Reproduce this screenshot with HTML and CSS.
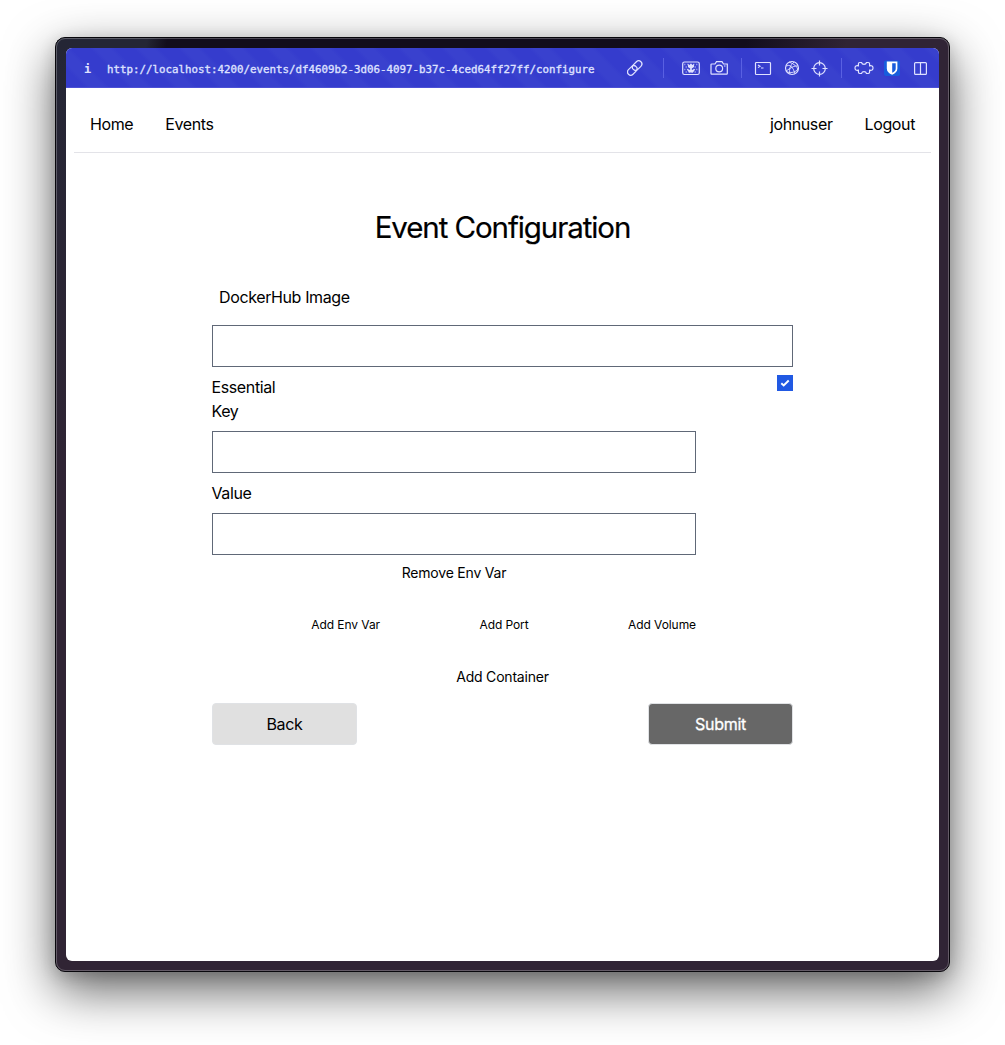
FILE: index.html
```html
<!DOCTYPE html>
<html lang="en">
<head>
<meta charset="utf-8">
<title>Event Configuration</title>
<link rel="stylesheet" href="styles.css">
</head>
<body>
<div class="window">
  <div class="screen">
    <header class="toolbar">
      <span class="info">i</span>
      <span class="url">http://localhost:4200/events/df4609b2-3d06-4097-b37c-4ced64ff27ff/configure</span>
      <svg class="tools" width="312" height="40" viewBox="0 0 312 40" fill="none" stroke="currentColor" stroke-width="1.2">
        <g transform="translate(7.700 20) rotate(-45)"><rect x="-8.800" y="-3.200" width="10.800" height="6.400" rx="3.200"/><rect x="-2" y="-3.200" width="10.800" height="6.400" rx="3.200"/></g>
        <path class="divider" d="M36.500 10v20M114.500 10v20M214.500 10v20"/>
        <rect x="55.700" y="14" width="16.600" height="12.500" rx="1.800"/>
        <path stroke-dasharray="1.500 1.500" stroke-width="1.500" opacity=".5" d="M57 16.500h14M58.500 19h12M57 21.500h14M58.500 24h12"/>
        <path fill="currentColor" stroke="none" d="M61 16l1.500 1 1.500-1.500 1.500 1.500 1.500-1v3l-2.200 1.500v1.500l3.700-1.300-2.500 3.800h-4l-2.500-3.800 3.700 1.300v-1.500L61 19z"/>
        <path d="M84.700 16h3.300l1.500-2.300h5.500l1.500 2.300h3.800v9.500q0 .6-.6.600H84.600q-.6 0-.6-.6v-9q0-.5.700-.5z"/><circle cx="92.200" cy="20.500" r="3.400"/><path d="M97 18h1.500"/>
        <rect x="128.500" y="14.500" width="15" height="12" rx=".8"/><path d="M131 17l2 1.300-2 1.300M134 20h2.500"/>
        <g transform="translate(165 20)"><circle r="6.500"/><path stroke-width=".9" d="M-6-2Q0-5 3 5.700M-3-6Q5-3 6 2M-5.800 3Q2-3 6-2M-2 6Q-4-1 2-6M-5 4Q2 6 6 1"/></g>
        <g transform="translate(192.500 20.500)"><circle r="5.800"/><path d="M0-8v5M0 3v5M-8 0h5M3 0h5"/></g>
        <path d="M234.500 14.500q.5 1.800 2.500 1.800t2.500-1.800h1.800q1.300 0 1.300 1.400v1.900q3.400-.7 3.400 2.200t-3.400 2.200v1.900q0 1.400-1.300 1.400h-1.800q-.5-1.800-2.500-1.800t-2.500 1.800h-1.800q-1.300 0-1.300-1.400v-1.900q-3.400.7-3.400-2.200t3.400-2.200v-1.900q0-1.400 1.300-1.400z"/>
        <rect x="257" y="12.500" width="16" height="15.500" rx="2" fill="#175ddc" stroke="none"/>
        <path fill="#fff" stroke="none" fill-rule="evenodd" d="M259.800 13.500h10.600v7c0 3.200-2.300 5-5.300 6.200-3-1.200-5.300-3-5.300-6.200zM265.200 15.200v9.600c2.200-1.100 3.500-2.300 3.500-4.400v-5.200z"/>
        <rect x="287.600" y="14.600" width="11.800" height="11.800" rx="1"/><path d="M293.500 14.600v11.800"/>
      </svg>
    </header>
    <nav class="nav">
      <div class="links"><a>Home</a><a>Events</a></div>
      <div class="links"><a>johnuser</a><a>Logout</a></div>
    </nav>
    <main class="page">
      <h1>Event Configuration</h1>
      <form class="form">
        <label class="image-label">DockerHub Image</label>
        <input class="field" type="text">
        <div class="essential"><label>Essential</label>
          <svg class="check" width="16" height="16" viewBox="0 0 16 16"><path d="M4.300 8.300l2.400 2.200L11.700 5.500" fill="none" stroke="#fff" stroke-width="1.900"/></svg>
        </div>
        <div class="env">
          <label>Key</label>
          <input class="field" type="text">
          <label>Value</label>
          <input class="field" type="text">
          <button type="button" class="text-button remove">Remove Env Var</button>
          <div class="adders">
            <button type="button" class="text-button">Add Env Var</button>
            <button type="button" class="text-button">Add Port</button>
            <button type="button" class="text-button">Add Volume</button>
          </div>
        </div>
        <button type="button" class="text-button container-button">Add Container</button>
        <div class="actions">
          <button type="button" class="button back">Back</button>
          <button type="button" class="button submit">Submit</button>
        </div>
      </form>
    </main>
  </div>
</div>
</body>
</html>
```
FILE: styles.css
```css
* { box-sizing: border-box; }
body {
  margin: 0;
  height: 1045px;
  padding: 37px 55px 73px;
  overflow: hidden;
  background: #fff;
  color: #000;
  font: 16px/24px Inter, "Liberation Sans", sans-serif;
  letter-spacing: -.38px;
}
.window {
  width: 895px;
  height: 935px;
  padding: 10px;
  border: 1px solid #08070c;
  outline: 1px solid rgba(255, 255, 255, .25);
  outline-offset: -2px;
  border-radius: 10px;
  background:
    linear-gradient(100deg, #242635 0 90px, #120d1c 110px 680px, transparent 780px) 0 0 / 100% 10px no-repeat,
    linear-gradient(#242635, #302434 50%) 0 0 / 30px 100% no-repeat,
    #302435;
  box-shadow: 0 18px 50px rgba(0, 0, 0, .62), 0 4px 16px rgba(0, 0, 0, .16);
}
.screen { height: 913px; border-radius: 6px; overflow: hidden; background: #fff; }
.toolbar {
  height: 40px;
  display: flex;
  align-items: center;
  color: #dfe1ff;
  border-bottom: 1px solid #4c50d5;
  background: repeating-linear-gradient(45deg, #353ccd 0 13px, #3941ce 17px 27px, #353ccd 31px);
}
.info { width: 41px; padding: 2px 0 0 18px; font: bold 12px "DejaVu Sans Mono", monospace; letter-spacing: 0; }
.url { width: 520px; padding-top: 3px; font: 10.8px "DejaVu Sans Mono", monospace; letter-spacing: 0; -webkit-text-stroke: .35px; }
.tools { flex: none; }
.divider { stroke: #5960e2; stroke-width: 1; }
.nav {
  height: 65px;
  margin: 0 8px;
  padding: 8px 16px 0;
  display: flex;
  align-items: center;
  justify-content: space-between;
  border-bottom: 1px solid #e3e3e8;
}
.links { display: flex; gap: 32px; }
.page { padding-top: 56px; }
h1 { margin: 0; font-size: 29.500px; line-height: 36px; font-weight: 400; text-align: center; letter-spacing: -1.080px; -webkit-text-stroke: .2px; }
.form { width: 581px; margin: 40px auto 0; display: flex; flex-direction: column; }
.form label { margin-left: -.5px; }
.form .image-label { margin: 0 0 16px 7px; }
.field { width: 100%; height: 42px; margin: 0; border: 1px solid #606877; background: #fff; }
.essential { display: flex; justify-content: space-between; padding-top: 8px; }
.check { background: #2159e3; }
.env { width: 484px; display: flex; flex-direction: column; gap: 8px; }
.text-button { border: 0; padding: 0; background: none; color: #000; font: 14px/20px Inter, sans-serif; letter-spacing: -.2px; }
.adders { display: grid; grid-template-columns: 168px 1fr auto; margin-top: 24px; }
.adders .text-button { font-size: 12px; line-height: 20px; letter-spacing: -.08px; }
.adders .text-button:first-child { text-align: right; }
.container-button { margin-top: 32px; }
.actions { display: flex; justify-content: space-between; margin-top: 16px; }
.button { width: 145px; height: 42px; border: 1px solid #e0e2e5; border-radius: 4px; font: 16px/24px Inter, sans-serif; letter-spacing: -.3px; }
.back { background: #e0e0e0; color: #000; }
.submit { background: #676767; color: #fff; -webkit-text-stroke: .3px; }
```
